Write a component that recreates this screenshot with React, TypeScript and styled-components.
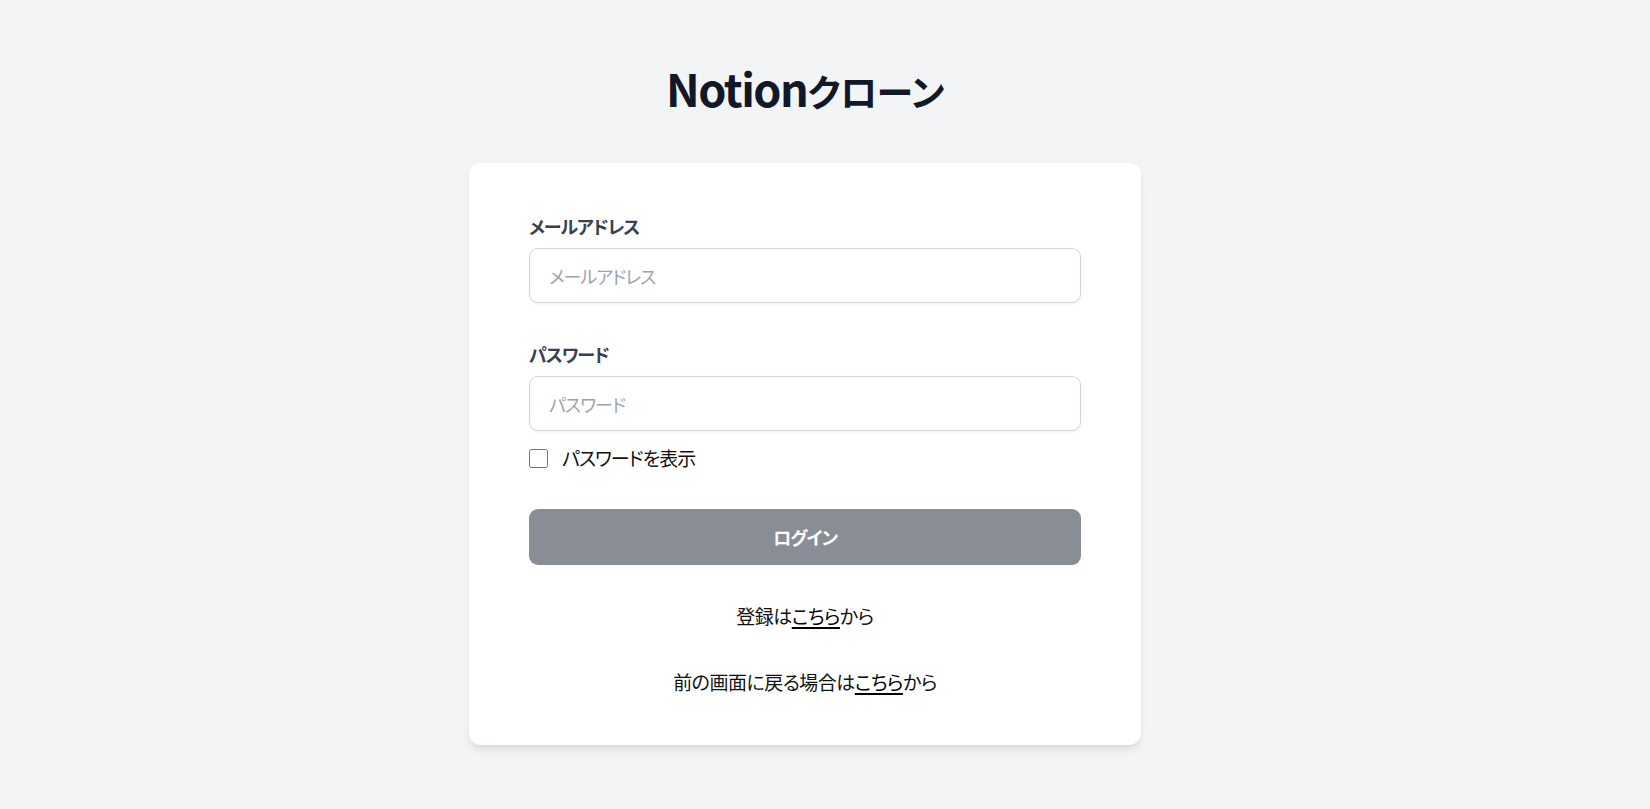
import React, { useState } from "react";
import styled, { createGlobalStyle } from "styled-components";

const GlobalStyle = createGlobalStyle`
  html, body {
    margin: 0;
    padding: 0;
    background: #f3f4f6;
  }
  body {
    font-family: "Noto Sans CJK JP", "Noto Sans", sans-serif;
    font-feature-settings: "palt";
    color: #111111;
  }
  * { box-sizing: border-box; }
`;

const Page = styled.main`
  min-height: 100vh;
  display: flex;
  flex-direction: column;
  align-items: center;
  padding: 61px 40px 40px 0;
`;

const Title = styled.h1`
  margin: 0 0 48px;
  font-size: 45px;
  line-height: 54px;
  font-weight: 600;
  letter-spacing: -1.5px;
  color: #111827;
`;

const TitleKana = styled.span`
  font-size: 37px;
  line-height: 1;
  letter-spacing: -0.5px;
`;

const Card = styled.section`
  width: 672px;
  background: #ffffff;
  border-radius: 12px;
  box-shadow: 0 6px 9px -1.5px rgba(0, 0, 0, 0.08), 0 3px 6px -3px rgba(0, 0, 0, 0.08);
  padding: 48px 60px;
`;

const Form = styled.form`
  display: flex;
  flex-direction: column;
  gap: 36px;
`;

const Field = styled.div`
  display: flex;
  flex-direction: column;
`;

const Label = styled.label`
  display: block;
  font-size: 18px;
  line-height: 30px;
  font-weight: 700;
  letter-spacing: -1px;
  color: #374151;
  margin-bottom: 7px;
`;

const Input = styled.input`
  width: 100%;
  height: 55px;
  border: 1px solid #d1d5db;
  border-radius: 9px;
  padding: 0 19px;
  font-family: inherit;
  font-feature-settings: "palt";
  font-size: 18px;
  letter-spacing: -1px;
  color: #111827;
  background: #fff;
  box-shadow: 0 1.5px 3px rgba(0, 0, 0, 0.04);
  outline: none;
  &::placeholder {
    color: #9ca3af;
  }
`;

const CheckRow = styled.label`
  margin-top: 12px;
  display: flex;
  align-items: center;
  gap: 14px;
  font-size: 19px;
  line-height: 30px;
  letter-spacing: -1px;
  color: #111111;
`;

const CheckBox = styled.input`
  width: 19px;
  height: 19px;
  margin: 0;
`;

const Button = styled.button`
  width: 100%;
  height: 56px;
  border: none;
  border-radius: 9px;
  background: #898d95;
  color: #ffffff;
  font-family: inherit;
  font-feature-settings: "palt";
  font-size: 18px;
  font-weight: 700;
  letter-spacing: -1px;
  cursor: pointer;
`;

const Note = styled.p`
  margin: 0;
  text-align: center;
  font-size: 19px;
  line-height: 30px;
  letter-spacing: -0.5px;
  color: #111111;
`;

const Link = styled.a`
  color: #000000;
  text-decoration: underline;
  text-underline-offset: 3px;
  text-decoration-thickness: 2px;
`;

export default function App() {
  const [show, setShow] = useState(false);
  return (
    <>
      <GlobalStyle />
      <Page>
        <Title>
          Notion<TitleKana>クローン</TitleKana>
        </Title>
        <Card>
          <Form onSubmit={(e) => e.preventDefault()}>
            <Field>
              <Label htmlFor="email">メールアドレス</Label>
              <Input id="email" type="email" placeholder="メールアドレス" />
            </Field>
            <Field>
              <Label htmlFor="password">パスワード</Label>
              <Input id="password" type={show ? "text" : "password"} placeholder="パスワード" />
              <CheckRow>
                <CheckBox type="checkbox" checked={show} onChange={(e) => setShow(e.target.checked)} />
                パスワードを表示
              </CheckRow>
            </Field>
            <Button type="submit">ログイン</Button>
            <Note>
              登録は<Link href="#">こちら</Link>から
            </Note>
            <Note>
              前の画面に戻る場合は<Link href="#">こちら</Link>から
            </Note>
          </Form>
        </Card>
      </Page>
    </>
  );
}
